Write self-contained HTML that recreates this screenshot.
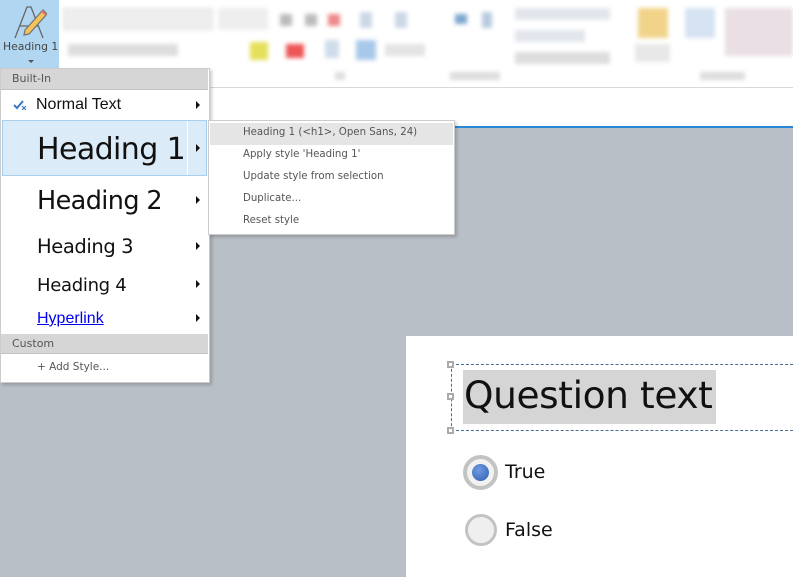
<!DOCTYPE html>
<html><head><meta charset="utf-8"><style>
*{margin:0;padding:0;box-sizing:border-box}
body{width:793px;height:577px;overflow:hidden;background:#b9bfc6;position:relative;font-family:"DejaVu Sans","Liberation Sans",sans-serif}
.abs{position:absolute}
.blur{position:absolute;filter:blur(2px)}
.row{position:absolute;left:1px;width:207px;color:#111}
.arr{position:absolute;left:195px;width:0;height:0;border-left:4px solid #111;border-top:4px solid transparent;border-bottom:4px solid transparent}
.hdr{position:absolute;left:1px;width:207px;background:#d6d6d6;border-bottom:1px solid #c4c4c4;color:#555;font-size:11px;padding-left:11px}
.sub{position:absolute;left:243px;font-size:10.2px;color:#555}
</style></head><body>
<div class="abs" style="left:0;top:0;width:793px;height:88px;background:#fff;border-bottom:1px solid #d8d8d8"></div>
<div class="abs" style="left:0;top:88px;width:793px;height:39px;background:#fff"></div>
<div class="abs" style="left:55px;top:126px;width:738px;height:2px;background:#2b88d8"></div>
<div class="blur" style="left:63px;top:8px;width:150px;height:22px;background:#eee;border:1px solid #ddd"></div>
<div class="blur" style="left:218px;top:8px;width:50px;height:22px;background:#eee"></div>
<div class="blur" style="left:280px;top:14px;width:12px;height:12px;background:#bbb"></div>
<div class="blur" style="left:305px;top:14px;width:12px;height:12px;background:#bbb"></div>
<div class="blur" style="left:328px;top:14px;width:12px;height:12px;background:#e88"></div>
<div class="blur" style="left:360px;top:12px;width:12px;height:16px;background:#ccd8e6"></div>
<div class="blur" style="left:395px;top:12px;width:12px;height:16px;background:#ccd8e6"></div>
<div class="blur" style="left:455px;top:14px;width:12px;height:10px;background:#7ea6d0"></div>
<div class="blur" style="left:482px;top:12px;width:10px;height:16px;background:#b9cbe0"></div>
<div class="blur" style="left:68px;top:44px;width:110px;height:12px;background:#ddd"></div>
<div class="blur" style="left:250px;top:42px;width:18px;height:18px;background:#e5e05a"></div>
<div class="blur" style="left:286px;top:44px;width:18px;height:14px;background:#e55"></div>
<div class="blur" style="left:325px;top:40px;width:14px;height:18px;background:#cfdcea"></div>
<div class="blur" style="left:356px;top:40px;width:20px;height:20px;background:#a8c8ea"></div>
<div class="blur" style="left:385px;top:44px;width:40px;height:12px;background:#e4e4e4"></div>
<div class="blur" style="left:515px;top:8px;width:95px;height:12px;background:#e2e6ec"></div>
<div class="blur" style="left:515px;top:30px;width:70px;height:12px;background:#e2e6ec"></div>
<div class="blur" style="left:515px;top:52px;width:95px;height:12px;background:#ddd"></div>
<div class="blur" style="left:638px;top:8px;width:30px;height:30px;background:#f1d48a"></div>
<div class="blur" style="left:635px;top:44px;width:35px;height:18px;background:#e8e8e8"></div>
<div class="blur" style="left:685px;top:8px;width:30px;height:30px;background:#d6e3f2"></div>
<div class="blur" style="left:725px;top:8px;width:68px;height:48px;background:#eadfe4"></div>
<div class="blur" style="left:450px;top:72px;width:50px;height:8px;background:#ddd"></div>
<div class="blur" style="left:700px;top:72px;width:45px;height:8px;background:#ddd"></div>
<div class="blur" style="left:335px;top:72px;width:10px;height:8px;background:#ddd"></div>
<div class="abs" style="left:0;top:0;width:59px;height:69px;background:#b1d6f2"></div>
<svg class="abs" style="left:13px;top:4px" width="34" height="36" viewBox="0 0 34 36" fill="none" stroke="#666" stroke-width="1.3">
<path d="M2 34 L14 3 L18 3 L30 34 M7 22 L25 22"/>
<path d="M12 26 L30 6 L34 10 L16 30 L11 31 Z" fill="#f5c35a" stroke="#777"/>
<path d="M29 7 L33 11" stroke="#e07070" stroke-width="2"/>
</svg>
<div class="abs" style="left:3px;top:40px;font-size:10.8px;color:#444">Heading 1</div>
<div class="abs" style="left:28px;top:60px;border-top:3px solid #555;border-left:3px solid transparent;border-right:3px solid transparent"></div>
<div class="abs" style="left:406px;top:336px;width:387px;height:241px;background:#fff"></div>
<div class="abs" style="left:451px;top:364px;width:342px;height:67px;border:1px dashed #4a6e96;border-right:none"></div>
<div class="abs" style="left:447px;top:361px;width:7px;height:7px;border:2px solid #aaa;background:#fff"></div>
<div class="abs" style="left:447px;top:393px;width:7px;height:7px;border:2px solid #aaa;background:#fff"></div>
<div class="abs" style="left:447px;top:427px;width:7px;height:7px;border:2px solid #aaa;background:#fff"></div>
<div class="abs" style="left:463px;top:370px;width:253px;height:54px;background:#d5d5d5"></div>
<div class="abs" style="left:464px;top:373px;font-size:37.5px;color:#111;letter-spacing:-0.4px">Question text</div>
<div class="abs" style="left:463px;top:455px;width:35px;height:35px;border-radius:50%;border:4px solid #c3c3c3;background:#f2f2f2"></div>
<div class="abs" style="left:472px;top:464px;width:17px;height:17px;border-radius:50%;background:radial-gradient(circle at 40% 35%,#6f9be0,#2f5faf)"></div>
<div class="abs" style="left:505px;top:461px;font-size:19px;color:#111">True</div>
<div class="abs" style="left:465px;top:514px;width:32px;height:32px;border-radius:50%;border:3px solid #c3c3c3;background:#efefef"></div>
<div class="abs" style="left:505px;top:519px;font-size:19px;color:#111">False</div>
<div class="abs" style="left:0;top:68px;width:210px;height:315px;background:#fff;border:1px solid #ccc;box-shadow:2px 2px 3px rgba(0,0,0,.2)"></div>
<div class="hdr" style="top:69px;height:21px;line-height:20px">Built-In</div>
<div class="row" style="top:90px;height:30px">
<svg class="abs" style="left:12px;top:10px" width="14" height="10" viewBox="0 0 14 10"><path d="M1 5 L4 8 L10 1" stroke="#3a78c4" stroke-width="2" fill="none"/><path d="M9 6 L13 10 M13 6 L9 10" stroke="#3a78c4" stroke-width="1.2"/></svg>
<div class="abs" style="left:35px;top:6px;font-family:'Liberation Sans',sans-serif;font-size:16px">Normal Text</div><div class="arr" style="top:11px"></div></div>
<div class="abs" style="left:2px;top:120px;width:205px;height:56px;background:#dcebf8;border:1px solid #a9cfef"></div>
<div class="abs" style="left:187px;top:121px;width:1px;height:54px;background:#fff"></div>
<div class="row" style="top:120px;height:56px"><div class="abs" style="left:36px;top:12px;font-size:30px;letter-spacing:-0.6px">Heading 1</div><div class="arr" style="top:24px"></div></div>
<div class="row" style="top:178px;height:48px"><div class="abs" style="left:36px;top:8px;font-size:25.5px;letter-spacing:-0.6px">Heading 2</div><div class="arr" style="top:18px"></div></div>
<div class="row" style="top:228px;height:38px"><div class="abs" style="left:36px;top:7px;font-size:19.5px;letter-spacing:-0.4px">Heading 3</div><div class="arr" style="top:14px"></div></div>
<div class="row" style="top:268px;height:36px"><div class="abs" style="left:36px;top:7px;font-size:18px;letter-spacing:-0.3px">Heading 4</div><div class="arr" style="top:12px"></div></div>
<div class="row" style="top:305px;height:28px"><div class="abs" style="left:36px;top:5px;font-family:'Liberation Sans',sans-serif;font-size:16px;color:#00e;text-decoration:underline">Hyperlink</div><div class="arr" style="top:9px"></div></div>
<div class="hdr" style="top:334px;height:20px;line-height:19px">Custom</div>
<div class="abs" style="left:37px;top:361px;font-size:10.5px;color:#555">+ Add Style...</div>
<div class="abs" style="left:208px;top:120px;width:247px;height:115px;background:#fff;border:1px solid #ccc;box-shadow:2px 2px 3px rgba(0,0,0,.2)"></div>
<div class="abs" style="left:210px;top:123px;width:243px;height:22px;background:#e5e5e5"></div>
<div class="sub" style="top:127px">Heading 1 (&lt;h1&gt;, Open Sans, 24)</div>
<div class="sub" style="top:149px">Apply style 'Heading 1'</div>
<div class="sub" style="top:171px">Update style from selection</div>
<div class="sub" style="top:193px">Duplicate...</div>
<div class="sub" style="top:215px">Reset style</div>
</body></html>
